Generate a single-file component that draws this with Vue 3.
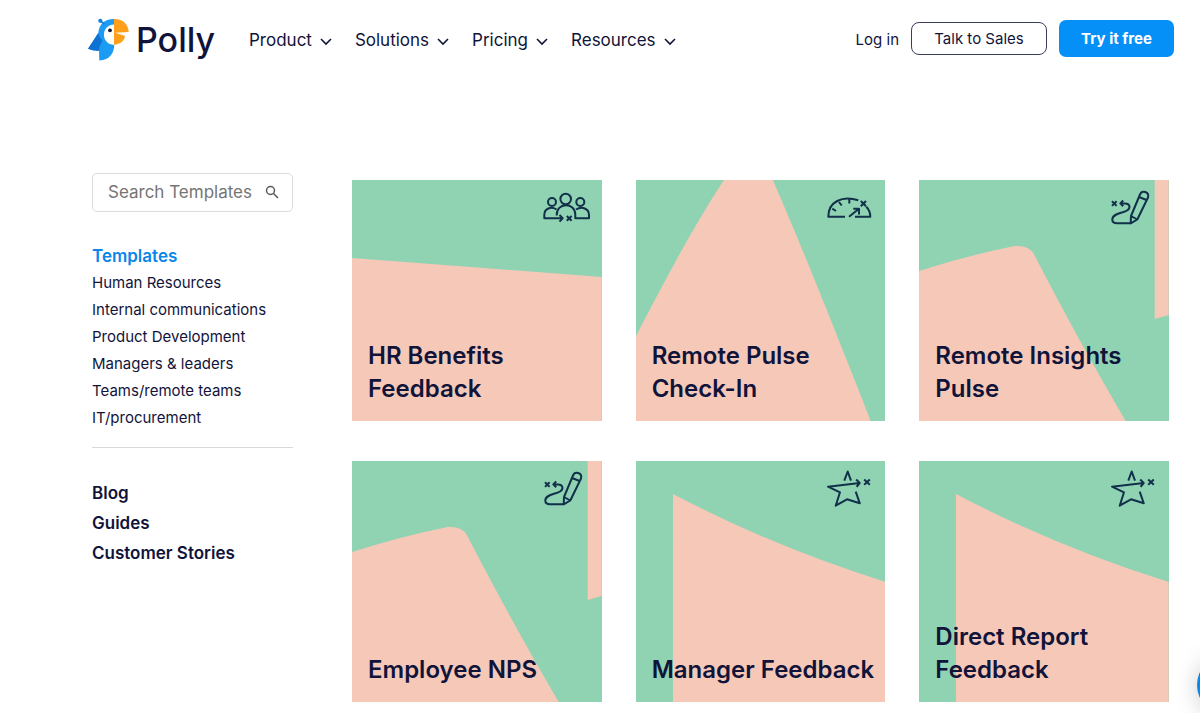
<script setup>
const nav = ['Product', 'Solutions', 'Pricing', 'Resources']
const topics = [
  'Human Resources',
  'Internal communications',
  'Product Development',
  'Managers & leaders',
  'Teams/remote teams',
  'IT/procurement',
]
const more = ['Blog', 'Guides', 'Customer Stories']

const art = {
  slope: ['M0 78L250 97V241H0Z'],
  peak: ['M0 156C30 98 58 46 88 0H137C170 76 204 162 235 241H0Z'],
  hill: ['M0 91Q50 75 96 66Q110 65 115 74C145 132 177 190 207 241H0Z', 'M236 0H250V135L236 139Z'],
  fold: ['M37 33Q138 86 250 121V241H37Z'],
}
const icons = {
  people: [
    'M31 11a5.3 5.3 0 1 1-10.6 0a5.3 5.3 0 0 1 10.6 0Z',
    'M16 14a4 4 0 1 1-8 0a4 4 0 0 1 8 0Z',
    'M44.3 14a4 4 0 1 1-8 0a4 4 0 0 1 8 0Z',
    'M16.5 21.5C11 18 4.3 20.5 4.3 27V30.3H22.7M19.5 27l3.2 3.3l-3.2 3.3',
    'M16.7 27.5C16 14 35.3 14 35.3 26.5V30.3H49V27C49 20.5 42 18 36 21.5',
    'M26.8 28l4.8 4.8M31.6 28l-4.8 4.8',
  ],
  gauge: [
    'M22 28.7H5.3C5.3 14 19 7 35.3 12.3M43.3 18.7C46 21.5 47.3 25 47.3 28.7H32',
    'M26.3 10.5V15.5M16 14l2.7 3.5M9.3 20.7l3.7 2.3',
    'M26 28.7L36 20.7M30.3 20.7H36V26.5M37.8 13l5.2 5.2M43 13l-5.2 5.2',
  ],
  pencil: [
    'M5 13.3l4.6 4.6M9.6 13.3L5 17.9M16.2 12.5l-2.9 2.9l2.9 2.9M13.5 15.4H18C23 15.4 24 20 20 22.5C15 25.5 5.3 25.5 5.3 31.5C5.3 34 7 35.3 10 35.3H23.7',
    'M24 28L33 6.5C35 1.5 42.5 4 41 9.5L30.3 31.5L23.7 35.3ZM24 28l6.3 3.5M32 9l7.6 3',
  ],
  star: [
    'M21.3 11.7L24.7 2.5L28 11.7',
    'M36.7 14L5 17.7L17 23.3L12.7 36.7L24 30.3L36.8 34.3L32.7 22.7M33.2 10.5L36.7 14L33.6 17.8',
    'M41.2 10.5l5.6 5.2M46.8 10.5l-5.6 5.2',
  ],
}
const cards = [
  { title: 'HR Benefits Feedback', art: 'slope', icon: 'people' },
  { title: 'Remote Pulse Check-In', art: 'peak', icon: 'gauge' },
  { title: 'Remote Insights Pulse', art: 'hill', icon: 'pencil' },
  { title: 'Employee NPS', art: 'hill', icon: 'pencil' },
  { title: 'Manager Feedback', art: 'fold', icon: 'star' },
  { title: 'Direct Report Feedback', art: 'fold', icon: 'star' },
]
</script>

<template>
  <div class="page">
    <header class="header">
      <a class="logo" href="#" aria-label="Polly home">
        <svg class="bird" viewBox="0 0 42 46" aria-hidden="true">
          <path d="M27 2C17 2 12 8 11.3 16L1 31.7Q6 34 12 33.7L12.3 43.5C23 43 27 36 27.3 27.7Z" fill="#1c9bf5" />
          <path d="M11.3 16L1 31.7Q6 34 12 33.7C12 29 14 26 15.500 24Q12 20 11.300 16Z" fill="#0f72d2" />
          <path d="M27.2 7.5C13.5 8 13.500 27.500 27.2 27.900Z" fill="#fff" />
          <path d="M13.3 4L17.5 7" stroke="#1583dd" stroke-width="2" />
          <circle cx="13.3" cy="3.8" r="2.1" fill="#1583dd" />
          <circle cx="23" cy="13.3" r="1.9" fill="#11143a" />
          <path d="M27 2C35 1.5 41.5 7 41.7 15L28 15.7L37.8 18.7C38 24 33 27 27 27.7Z" fill="#ff9f1c" />
        </svg>
        <span>Polly</span>
      </a>
      <nav class="nav" aria-label="Main">
        <button v-for="item in nav" :key="item" type="button">
          {{ item }}
          <svg viewBox="0 0 12 8" aria-hidden="true"><path d="M1 1L6 6L11 1" /></svg>
        </button>
      </nav>
      <div class="actions">
        <a class="login" href="#">Log in</a>
        <button class="sales" type="button">Talk to Sales</button>
        <button class="try" type="button">Try it free</button>
      </div>
    </header>

    <div class="content">
      <aside class="sidebar">
        <form class="search" role="search" @submit.prevent>
          <input type="text" placeholder="Search Templates" aria-label="Search Templates" />
          <button type="submit" aria-label="Search">
            <svg viewBox="0 0 14 14" aria-hidden="true"><circle cx="5.5" cy="5.5" r="4" /><path d="M8.5 8.5L13 13" /></svg>
          </button>
        </form>
        <a class="heading" href="#">Templates</a>
        <ul class="topics">
          <li v-for="topic in topics" :key="topic"><a href="#">{{ topic }}</a></li>
        </ul>
        <ul class="more">
          <li v-for="item in more" :key="item"><a href="#">{{ item }}</a></li>
        </ul>
      </aside>

      <main class="grid">
        <a v-for="card in cards" :key="card.title" class="card" href="#">
          <svg class="art" viewBox="0 0 250 241" preserveAspectRatio="none" aria-hidden="true">
            <path v-for="d in art[card.art]" :key="d" :d="d" />
          </svg>
          <svg class="icon" viewBox="0 0 56 44" aria-hidden="true">
            <path v-for="d in icons[card.icon]" :key="d" :d="d" />
          </svg>
          <h2>{{ card.title }}</h2>
        </a>
      </main>
    </div>

    <button class="chat" type="button" aria-label="Open chat"></button>
  </div>
</template>

<style>
body {
  margin: 0;
  background: #fff;
}
</style>

<style scoped>
.page {
  font-family: Inter, "Liberation Sans", sans-serif;
  color: #11143a;
}
a {
  color: inherit;
  text-decoration: none;
}
button {
  font: inherit;
  color: inherit;
  background: none;
  border: 0;
  padding: 0;
  cursor: pointer;
}
ul {
  list-style: none;
  margin: 0;
  padding: 0;
}
.header {
  display: flex;
  align-items: center;
  height: 77px;
  padding: 0 26px 0 87px;
}
.logo {
  display: flex;
  align-items: center;
  gap: 7px;
  width: 162px;
  padding-top: 3px;
  font-size: 34px;
  font-weight: 500;
  line-height: 46px;
}
.bird {
  width: 42px;
  height: 46px;
}
.nav {
  display: flex;
  gap: 23px;
  padding-top: 3px;
  font-size: 17px;
}
.nav button {
  display: flex;
  align-items: center;
  gap: 8px;
  line-height: 24px;
}
.nav svg {
  width: 12px;
  height: 8px;
  margin-top: 4px;
  fill: none;
  stroke: #11143a;
  stroke-width: 1.6;
}
.actions {
  display: flex;
  align-items: center;
  gap: 12px;
  margin-left: auto;
  font-size: 15px;
}
.login {
  padding-top: 2px;
}
.sales {
  width: 136px;
  height: 33px;
  border: 1px solid #3a3c5c;
  border-radius: 8px;
}
.try {
  width: 115px;
  height: 37px;
  border-radius: 7px;
  background: #0590f8;
  color: #fff;
  font-weight: 700;
}
.content {
  display: flex;
  gap: 59px;
  padding: 96px 31px 11px 92px;
}
.sidebar {
  flex: none;
  width: 201px;
}
.search {
  display: flex;
  align-items: center;
  box-sizing: border-box;
  height: 39px;
  padding: 0 13px 2px 15px;
  border: 1px solid #dcdcdc;
  border-radius: 5px;
}
.search input {
  flex: 1;
  min-width: 0;
  padding: 0;
  border: 0;
  outline: 0;
  font: 17px Inter, "Liberation Sans", sans-serif;
  color: #11143a;
}
.search input::placeholder {
  color: #757575;
  opacity: 1;
}
.search svg {
  display: block;
  width: 14px;
  height: 14px;
  fill: none;
  stroke: #5a5a5a;
  stroke-width: 1.5;
}
.heading {
  display: block;
  margin-top: 32px;
  font-size: 17px;
  font-weight: 600;
  line-height: 25px;
  color: #0b87ea;
}
.topics {
  padding-bottom: 16px;
  border-bottom: 1px solid #d9d9d9;
  font-size: 15px;
  line-height: 27px;
}
.more {
  padding-top: 30px;
  font-size: 17px;
  font-weight: 600;
  line-height: 30px;
}
.grid {
  flex: 1;
  display: grid;
  grid-template-columns: repeat(3, 1fr);
  grid-auto-rows: minmax(241px, auto);
  gap: 40px 34px;
  padding-top: 7px;
}
.card {
  position: relative;
  display: flex;
  align-items: flex-end;
  background: #8fd3b3;
}
.art {
  position: absolute;
  inset: 0;
  width: 100%;
  height: 100%;
  fill: #f6c8b8;
}
.icon {
  position: absolute;
  top: 8px;
  right: 6px;
  width: 56px;
  height: 44px;
  fill: none;
  stroke: #12304a;
  stroke-width: 2;
  stroke-linejoin: round;
}
.card h2 {
  position: relative;
  margin: 0;
  padding: 16px 8px 16px 16px;
  font-size: 24px;
  font-weight: 600;
  line-height: 33px;
}
.chat {
  position: fixed;
  right: -57px;
  bottom: -2px;
  width: 60px;
  height: 60px;
  border-radius: 50%;
  background: #0b87ea;
  box-shadow: 0 2px 24px rgba(0, 0, 0, 0.2);
}
</style>
